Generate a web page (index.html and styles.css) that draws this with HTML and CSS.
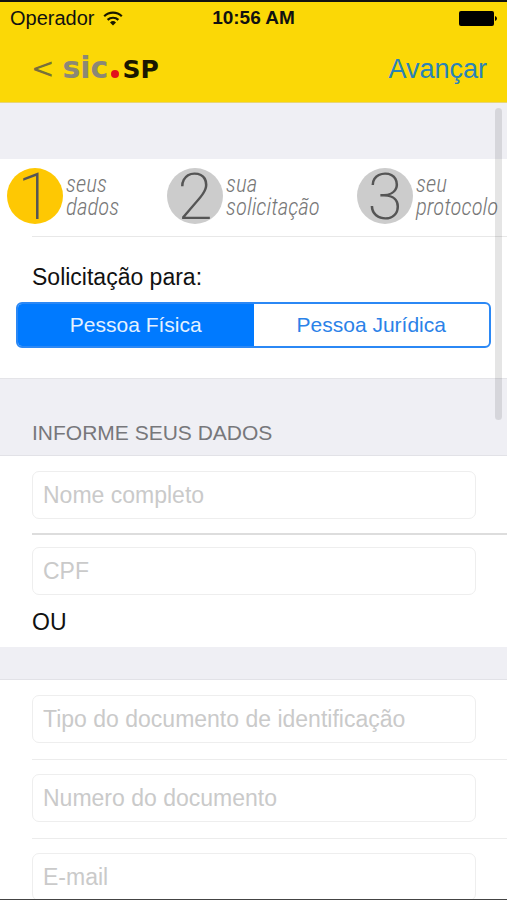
FILE: index.html
```
<!DOCTYPE html>
<html lang="pt-BR">
<head>
	<meta charset="utf-8">
	<meta name="viewport" content="width=device-width, initial-scale=1">
	<title>sic.SP</title>
	<link rel="stylesheet" href="styles.css">
</head>
<body>
<div class="screen">
	<header class="header">
		<div class="status">
			<div class="carrier">
				<span>Operador</span>
				<svg class="wifi" viewBox="0 0 20 15" width="20" height="15">
					<path d="M1.2 5.2a12.6 12.6 0 0 1 17.6 0" fill="none" stroke="#1a1800" stroke-width="2.2"/>
					<path d="M4.6 8.9a7.8 7.8 0 0 1 10.8 0" fill="none" stroke="#1a1800" stroke-width="2.2"/>
					<path d="M10 14.6l-3-3.1a4.3 4.3 0 0 1 6 0z" fill="#1a1800"/>
				</svg>
			</div>
			<div class="clock">10:56 AM</div>
			<svg class="battery" viewBox="0 0 38 15" width="38" height="15">
				<rect x="0" y="0" width="35" height="15" rx="2" fill="#000"/>
				<path d="M36 5q2 .6 2 2.500t-2 2.500z" fill="#000"/>
			</svg>
		</div>
		<nav class="nav">
			<a class="logo" href="#"><span class="back">&lt;</span><span class="sic">sic</span><span class="dot"></span><span class="sp">SP</span></a>
			<button class="next" type="button">Avançar</button>
		</nav>
	</header>

	<form class="content">
		<ol class="steps">
			<li class="step active"><span class="num">1</span><span class="name">seus<br>dados</span></li>
			<li class="step"><span class="num">2</span><span class="name">sua<br>solicitação</span></li>
			<li class="step"><span class="num">3</span><span class="name">seu<br>protocolo</span></li>
		</ol>

		<fieldset class="kind">
			<legend>Solicitação para:</legend>
			<div class="segmented">
				<label><input type="radio" name="pessoa" checked><span>Pessoa Física</span></label>
				<label><input type="radio" name="pessoa"><span>Pessoa Jurídica</span></label>
			</div>
		</fieldset>

		<h2 class="title">INFORME SEUS DADOS</h2>
		<div class="group">
			<div class="row tight"><input type="text" placeholder="Nome completo" aria-label="Nome completo"></div>
			<div class="row tight"><input type="text" placeholder="CPF" aria-label="CPF"></div>
			<p class="or">OU</p>
		</div>

		<div class="group docs">
			<div class="row"><input type="text" placeholder="Tipo do documento de identificação" aria-label="Tipo do documento de identificação"></div>
			<div class="row"><input type="text" placeholder="Numero do documento" aria-label="Numero do documento"></div>
			<div class="row"><input type="email" placeholder="E-mail" aria-label="E-mail"></div>
		</div>
		<div class="scrollbar"></div>
	</form>
</div>
</body>
</html>
```
FILE: styles.css
```
* {box-sizing: border-box;}
body {margin: 0; font-family: "Liberation Sans", Arial, sans-serif; font-size: 23px; line-height: 26px; color: #111;}
.screen {display: flex; flex-direction: column; height: 100vh; overflow: hidden; border-top: 2px solid #111; border-bottom: 1px solid #444;}

/* top bar */
.header {flex: none; background: #fbd806; border-bottom: 1px solid #e8d576;}
.status {display: grid; grid-template-columns: 1fr auto 1fr; align-items: center; padding: 4px 10px 0; line-height: 24px;}
.carrier {display: flex; align-items: center; gap: 8px; font-size: 20px;}
.clock {font-size: 19px; font-weight: bold;}
.battery {justify-self: end;}
.nav {display: flex; justify-content: space-between; align-items: center; height: 72px; padding: 8px 20px 2px 31px;}
.logo {display: flex; align-items: baseline; text-decoration: none; font-family: "DejaVu Sans", Verdana, sans-serif; font-size: 30px; font-weight: bold;}
.back {margin-right: 8px; font-size: 28px; font-weight: normal; color: #77703a;}
.sic {color: #8b8876;}
.dot {width: 8px; height: 8px; margin: 0 3px; border-radius: 50%; background: #e2101c;}
.sp {font-size: 25px; color: #1a1800;}
.next {padding: 0; border: 0; background: none; font: inherit; font-size: 27px; color: #2a83b8;}

/* scrolling part */
.content {position: relative; flex: 1; min-height: 0; overflow: hidden; padding-top: 56px; background: #efeff4;}
.scrollbar {position: absolute; top: 5px; right: 5px; width: 7px; height: 312px; border-radius: 4px; background: rgba(0,0,0,0.1);}

.steps {display: grid; grid-template-columns: 160fr 190fr 150fr; margin: 0; padding: 9px 0 12px 7px; list-style: none; background: #fff;}
.step {display: flex; align-items: center; gap: 3px;}
.num {flex: none; width: 56px; height: 56px; border-radius: 50%; background: #ccc; font-family: Roboto, Inter, sans-serif; font-weight: 200; font-size: 64px; line-height: 60px; text-align: center; color: #555;}
.active .num {background: #fec803;}
.name {font-family: "Liberation Sans Narrow", "Roboto Condensed", "Liberation Sans", sans-serif; font-style: italic; font-weight: 300; font-size: 23px; line-height: 23px; color: #777;}

.kind {margin: 0; padding: 28px 16px 30px; border: 0; background: #fff linear-gradient(#e8e8e8, #e8e8e8) 32px 0 / 100% 1px no-repeat;}
.kind legend {float: left; width: 100%; padding: 0 16px; margin-bottom: 12px;}
.segmented {display: flex; clear: both; border: 2px solid #2b88f5; border-radius: 6px; overflow: hidden;}
.segmented label {position: relative; flex: 1; cursor: pointer;}
.segmented input {position: absolute; opacity: 0;}
.segmented span {display: block; font-size: 21px; line-height: 42px; text-align: center; color: #2b82e8;}
.segmented input:checked + span {background: #007aff; color: #e4f1ff;}

.title {margin: 0; padding: 41px 32px 9px; border-top: 1px solid #e4e4e8; border-bottom: 1px solid #e2e2e7; font-size: 21px; font-weight: normal; color: #77777b;}
.group {background: #fff;}
.docs {margin-top: 32px; border-top: 1px solid #e2e2e7;}
.row {padding: 15px 31px 16px 32px;}
.row + .row {background: linear-gradient(#ececec, #ececec) 32px 0 / 100% 1px no-repeat;}
.tight {padding-bottom: 14px;}
.tight + .tight {padding-top: 14px; background: linear-gradient(#ddd, #ddd) 32px 0 / 100% 2px no-repeat;}
.row input {display: block; width: 100%; height: 48px; padding: 0 10px; border: 1px solid #eee; border-radius: 7px; background: #fff; font: inherit; color: #111;}
.row input::placeholder {color: #cacaca; opacity: 1;}
.or {margin: 0; padding: 0 32px 12px;}
```
